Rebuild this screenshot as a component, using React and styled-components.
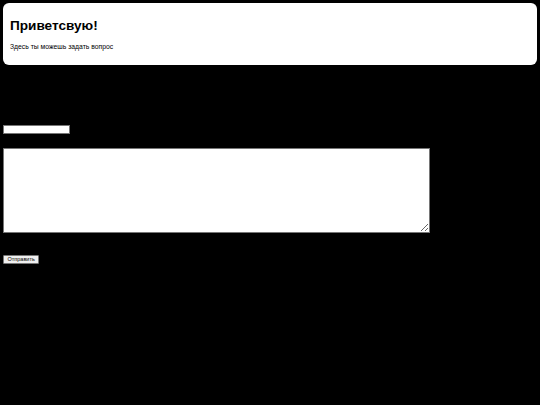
import React from "react";
import styled, { createGlobalStyle } from "styled-components";

const GlobalStyle = createGlobalStyle`
  html, body {
    margin: 0;
    padding: 0;
    background: #000;
    font-family: "Liberation Sans", Arial, sans-serif;
  }
`;

const Page = styled.div`
  padding: 3px;
  min-height: 399px;
  background: #000;
`;

const Card = styled.div`
  background: #fff;
  border-radius: 6px;
  padding: 15px 7px 14px;
`;

const Title = styled.h1`
  margin: 0;
  font-size: 13.6px;
  font-weight: bold;
  color: #000;
  line-height: 16px;
`;

const Subtitle = styled.p`
  margin: 9px 0 0;
  font-size: 6.8px;
  color: #000;
  line-height: 8px;
`;

const Form = styled.form`
  display: flex;
  flex-direction: column;
  align-items: flex-start;
  padding-top: 60px;
`;

const NameInput = styled.input`
  box-sizing: border-box;
  width: 67px;
  height: 9px;
  border: 1px solid #767676;
  background: #fff;
  padding: 0;
  margin: 0;
`;

const Message = styled.textarea`
  box-sizing: border-box;
  width: 427px;
  height: 85px;
  margin-top: 14px;
  border: 1px solid #767676;
  background: #fff;
  padding: 0;
`;

const Submit = styled.button`
  box-sizing: border-box;
  margin-top: 22px;
  height: 9px;
  padding: 0 3.5px;
  font-size: 5.5px;
  font-family: "Liberation Sans", Arial, sans-serif;
  background: #efefef;
  border: 1px solid #767676;
  border-radius: 1px;
  color: #000;
  line-height: 7px;
`;

export default function App() {
  return (
    <>
      <GlobalStyle />
      <Page>
        <Card>
          <Title>Приветсвую!</Title>
          <Subtitle>Здесь ты можешь задать вопрос</Subtitle>
        </Card>
        <Form onSubmit={(e) => e.preventDefault()}>
          <NameInput type="text" />
          <Message />
          <Submit type="submit">Отправить</Submit>
        </Form>
      </Page>
    </>
  );
}
